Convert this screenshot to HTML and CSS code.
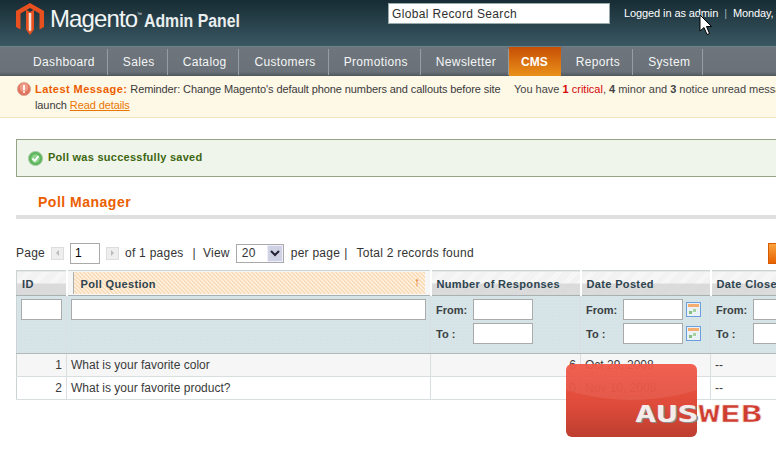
FILE: index.html
```html
<!DOCTYPE html>
<html lang="en">
<head>
  <meta charset="UTF-8" />
  <title>Poll Manager / Magento Admin</title>
  <link rel="stylesheet" href="styles.css">
</head>
<body>
<div class="page">

  <div class="header">
    <div class="brand">
      <svg class="logo" width="28" height="32" viewBox="0 0 28 32">
        <path fill="#e8501f" d="M14 0 L28 8 V24 L23.500 26.500 V10.500 L14 5 L4.500 10.500 V26.500 L0 24 V8 Z"/>
        <path fill="#e8501f" d="M14 9 L18 6.800 V26.500 L14 32 L10 26.500 V6.800 Z"/>
        <path fill="#f5f0e8" d="M12.700 10 H15.300 V27 L14 28.500 L12.700 27 Z" opacity=".9"/>
      </svg>
      <span class="brand-name">Magento<sup>™</sup></span>
      <span class="brand-sub">Admin Panel</span>
    </div>
    <input class="search" type="text" value="Global Record Search" />
    <div class="login">Logged in as admin <span class="sep">|</span> Monday, November 10, 2008</div>
  </div>

  <div class="nav">
    <a class="nav-item">Dashboard</a>
    <a class="nav-item">Sales</a>
    <a class="nav-item">Catalog</a>
    <a class="nav-item">Customers</a>
    <a class="nav-item">Promotions</a>
    <a class="nav-item">Newsletter</a>
    <a class="nav-item active">CMS</a>
    <a class="nav-item">Reports</a>
    <a class="nav-item">System</a>
  </div>

  <div class="notice">
    <svg class="notice-icon" width="14" height="14" viewBox="0 0 16 16">
      <circle cx="8" cy="8" r="7.500" fill="#e2735c" stroke="#d9a795"/>
      <circle cx="8" cy="6" r="5" fill="#ee9c88"/>
      <rect x="7" y="3.500" width="2" height="6" fill="#fff"/>
      <rect x="7" y="10.500" width="2" height="2" fill="#fff"/>
    </svg>
    <div class="notice-msg"><b>Latest Message:</b> Reminder: Change Magento's default phone numbers and callouts before site launch <a>Read details</a></div>
    <div class="notice-count">You have <b class="crit">1</b> <span class="crit">critical</span>, <b>4</b> minor and <b>3</b> notice unread messages</div>
  </div>

  <div class="content">
    <div class="success">
      <svg width="15" height="15" viewBox="0 0 16 16">
        <circle cx="8" cy="8" r="7.500" fill="#5db65c" stroke="#a9c9a4"/>
        <circle cx="8" cy="8" r="4.500" fill="#8fd28c"/>
        <path d="M4.800 8 L7.200 10.500 L11.200 5.500" fill="none" stroke="#fff" stroke-width="2"/>
      </svg>
      <span class="success-text">Poll was successfully saved</span>
    </div>

    <h3 class="title">Poll Manager</h3>

    <div class="pager">
      <span>Page</span>
      <span class="arrow"><i class="tri left"></i></span>
      <input class="page-input" type="text" value="1" />
      <span class="arrow"><i class="tri right"></i></span>
      <span>of 1 pages</span>
      <span class="bar">|</span>
      <span>View</span>
      <span class="view-select">20<span class="drop"><svg width="10" height="7" viewBox="0 0 10 7"><path d="M1 1 L5 5 L9 1" fill="none" stroke="#223" stroke-width="2"/></svg></span></span>
      <span>per page</span>
      <span class="bar tight">|</span>
      <span>Total 2 records found</span>
      <span class="action"></span>
    </div>

    <table class="grid">
      <colgroup>
        <col class="c-id"><col class="c-q"><col class="c-n"><col class="c-d"><col class="c-e">
      </colgroup>
      <tr class="heads">
        <th>ID</th>
        <th class="sorted"><div class="sort-box">Poll Question<span class="sort-arrow">↑</span></div></th>
        <th>Number of Responses</th>
        <th>Date Posted</th>
        <th>Date Closed</th>
      </tr>
      <tr class="filters">
        <td><input class="f-id" type="text" /></td>
        <td><input class="f-q" type="text" /></td>
        <td>
          <div class="range"><label>From:</label><input type="text" /></div>
          <div class="range"><label>To :</label><input type="text" /></div>
        </td>
        <td>
          <div class="range"><label>From:</label><input type="text" /><svg class="cal" width="15" height="15" viewBox="0 0 15 15"><use href="#cal"/></svg></div>
          <div class="range"><label>To :</label><input type="text" /><svg class="cal" width="15" height="15" viewBox="0 0 15 15"><use href="#cal"/></svg></div>
        </td>
        <td>
          <div class="range"><label>From:</label><input type="text" /></div>
          <div class="range"><label>To :</label><input type="text" /></div>
        </td>
      </tr>
      <tr class="odd">
        <td class="num">1</td><td>What is your favorite color</td><td class="num">6</td><td>Oct 29, 2008</td><td>--</td>
      </tr>
      <tr>
        <td class="num">2</td><td>What is your favorite product?</td><td class="num">0</td><td>Nov 10, 2008</td><td>--</td>
      </tr>
    </table>
  </div>

  <svg width="0" height="0" class="defs">
    <symbol id="cal" viewBox="0 0 15 15">
      <rect x=".5" y=".5" width="14" height="14" fill="#eaf2f8" stroke="#6a9fdc"/>
      <rect x="2" y="2" width="11" height="3" fill="#f6ad70"/>
      <rect x="3" y="9" width="3" height="3" fill="#86bd80"/>
      <rect x="7" y="7" width="3" height="3" fill="#a5d39f"/>
    </symbol>
  </svg>

  <svg class="cursor" width="14" height="22" viewBox="0 0 14 22">
    <path d="M1 1 V17 L5 13.500 L8 20.500 L10.500 19.500 L7.500 12.500 L12.500 12.500 Z" fill="#fff" stroke="#000"/>
  </svg>

  <div class="badge"><div class="gloss"></div></div>
  <div class="badge-text"><span class="aus">AUS</span><span class="web">WEB</span></div>
</div>
</body>
</html>
```

FILE: styles.css
```css
html, body {
  margin: 0;
  padding: 0;
  height: 450px;
  overflow: hidden;
}
body {
  font-family: "Liberation Sans", Arial, sans-serif;
  font-size: 12px;
  color: #2f2f2f;
  background: #fff;
}
.page {
  position: relative;
  width: 776px;
  height: 450px;
  overflow: hidden;
}
input {
  font-family: inherit;
  box-sizing: border-box;
  background: #fff;
  border: 1px solid #aaa;
  border-radius: 0;
  outline: none;
  margin: 0;
}

/* header */
.header {
  display: flex;
  align-items: flex-start;
  height: 47px;
  box-sizing: border-box;
  background: linear-gradient(#172c34, #3a5863);
  border-bottom: 1px solid #6d8189;
  white-space: nowrap;
  overflow: hidden;
}
.brand {
  display: flex;
  align-items: baseline;
  width: 388px;
  flex: none;
  padding: 3px 0 0 16px;
  box-sizing: border-box;
  height: 46px;
}
.logo {
  align-self: flex-start;
  flex: none;
}
.brand-name {
  font-size: 24px;
  color: #f2f5f5;
  margin-left: 6px;
  letter-spacing: -.9px;
  line-height: 32px;
}
.brand-name sup {
  font-size: 5px;
  vertical-align: 11px;
  line-height: 0;
  letter-spacing: 0;
}
.brand-sub {
  font-weight: bold;
  font-size: 18px;
  color: #e8eeee;
  margin-left: 2px;
  display: inline-block;
  transform-origin: 0 50%;
  transform: scaleX(.88);
}
.search {
  flex: none;
  width: 222px;
  height: 21px;
  margin-top: 3px;
  padding: 0 3px;
  font-size: 12px;
  letter-spacing: .35px;
  color: #2f2f2f;
  border: 1px solid #9aa;
}
.login {
  flex: none;
  margin: 7px 0 0 14px;
  font-size: 11px;
  letter-spacing: -.1px;
  color: #fff;
}
.sep {
  color: #9fb1b7;
  margin: 0 3px;
}

/* nav */
.nav {
  display: flex;
  height: 29px;
  padding-left: 18px;
  background: linear-gradient(#6e757c 0, #6a7178 85%, #4f565c 100%);
}
.nav-item {
  box-sizing: border-box;
  padding: 0 12px 0 15px;
  color: #f4f6f6;
  letter-spacing: .35px;
  border-right: 1px solid #979ea3;
  margin: 2px 0 1px;
  line-height: 27px;
}
.nav-item.active {
  margin: 0;
  padding: 0 13px 0 12px;
  line-height: 30px;
  font-weight: bold;
  letter-spacing: 0;
  color: #fff;
  background: linear-gradient(#c64f05, #ea9119);
  border-right: 0;
}

/* notices */
.notice {
  display: flex;
  height: 42px;
  box-sizing: border-box;
  background: #fef8e7;
  border-bottom: 1px solid #efe6c0;
  font-size: 11px;
  line-height: 16px;
  white-space: nowrap;
  overflow: hidden;
}
.notice-icon {
  flex: none;
  margin: 6px 0 0 17px;
}
.notice-msg {
  flex: none;
  width: 467px;
  margin: 5px 0 0 4px;
  white-space: normal;
  letter-spacing: -.1px;
  color: #3a3a3a;
}
.notice-msg b {
  color: #eb5e00;
  letter-spacing: .45px;
}
.notice-msg a {
  color: #ea7601;
  text-decoration: underline;
}
.notice-count {
  flex: none;
  margin: 5px 0 0 12px;
  color: #444;
}
.crit {
  color: #d40707;
}

/* content */
.content {
  padding: 21px 0 0 16px;
  width: 900px;
}
.success {
  display: flex;
  align-items: center;
  gap: 5px;
  height: 38px;
  box-sizing: border-box;
  padding-left: 11px;
  background: #eff5ea;
  border: 1px solid #95a486;
  color: #3d6611;
  font-size: 11px;
  letter-spacing: .26px;
  font-weight: bold;
}
.success-text {
  margin-bottom: 2px;
}
.title {
  margin: 14px 0 0;
  height: 24px;
  padding-left: 22px;
  border-bottom: 4px solid #dfdfdf;
  color: #eb5e00;
  font-size: 14px;
  line-height: 22px;
  letter-spacing: .5px;
}
.pager {
  display: flex;
  align-items: center;
  height: 22px;
  margin-top: 23px;
  letter-spacing: .25px;
  color: #333;
  white-space: nowrap;
}
.arrow {
  display: flex;
  align-items: center;
  justify-content: center;
  width: 13px;
  height: 13px;
  margin: 0 6px;
  box-sizing: border-box;
  background: #eee;
  border: 1px solid #ddd;
}
.tri {
  width: 0;
  height: 0;
  border: 3px solid transparent;
}
.tri.left {
  border-right-color: #bbb;
  border-left-width: 0;
}
.tri.right {
  border-left-color: #bbb;
  border-right-width: 0;
}
.page-input {
  width: 30px;
  height: 21px;
  padding: 0 4px;
  font-size: 12px;
}
.bar {
  margin: 0 7px 0 9px;
}
.bar.tight {
  margin: 0 9px 0 4px;
}
.view-select {
  display: flex;
  align-items: center;
  justify-content: space-between;
  width: 48px;
  height: 19px;
  margin: 0 7px 0 6px;
  padding-left: 5px;
  box-sizing: border-box;
  border: 1px solid #aaa;
}
.drop {
  display: flex;
  align-items: center;
  justify-content: center;
  width: 16px;
  height: 17px;
  background: #cfd2e2;
  border: 1px solid #eef;
  box-sizing: border-box;
}
.action {
  flex: none;
  width: 30px;
  height: 21px;
  margin-left: 294px;
  background: linear-gradient(#f9a33f, #e76200);
  border: 1px solid #d85a00;
  box-sizing: border-box;
}

/* table */
.grid {
  table-layout: fixed;
  width: 860px;
  margin-top: 6px;
  border-collapse: collapse;
  border: 1px solid #cbd3d4;
  font-size: 12px;
}
.c-id { width: 50px; }
.c-q { width: 364px; }
.c-n { width: 150px; }
.c-d { width: 130px; }
.c-e { width: 166px; }
.grid th {
  height: 25px;
  padding: 2px 4px 0 5px;
  box-sizing: border-box;
  text-align: left;
  font-size: 11px;
  letter-spacing: .35px;
  color: #2d444f;
  white-space: nowrap;
  background:
    linear-gradient(transparent 50%, rgba(210, 210, 210, .75) 50%),
    repeating-linear-gradient(135deg, #eeeeee 0 1px, #fafafa 1px 2px);
  border-right: 2px solid #fff;
  border-bottom: 1px solid #a9b0b2;
}
.grid th.sorted {
  padding: 1px 4px 1px 5px;
  background: #f6f6f6;
}
.sort-box {
  display: flex;
  justify-content: space-between;
  height: 22px;
  line-height: 24px;
  margin-right: 1px;
  padding: 0 4px 0 7px;
  border-left: 1px solid #a9b0b2;
  background:
    linear-gradient(45deg, #fbdcb9 25%, #fff0de 25% 50%, #fbdcb9 50% 75%, #fff0de 75%) 0 0 / 4px 4px;
}
.sort-arrow {
  color: #e05d00;
  font-size: 13px;
  font-weight: bold;
  line-height: 20px;
}
.filters td {
  height: 58px;
  padding: 3px 0 0 4px;
  box-sizing: border-box;
  vertical-align: top;
  background-color: #d7e5e8;
  background-image: radial-gradient(#cddcdf 1px, transparent 1px);
  background-size: 3px 3px;
  border-right: 1px solid #b3b8ba;
  border-bottom: 1px solid #b3b8ba;
}
.filters input {
  height: 21px;
  display: block;
}
.f-id {
  width: 41px;
}
.f-q {
  width: 355px;
}
.range {
  display: flex;
  align-items: center;
  height: 21px;
  margin-bottom: 3px;
  padding-left: 1px;
}
.range label {
  width: 37px;
  font-size: 11px;
  font-weight: bold;
  color: #3a3f42;
}
.range input {
  width: 60px;
}
.cal {
  margin-left: 3px;
}
.grid td {
  border-right: 1px solid #d9dfe0;
}
.grid tr.odd td,
.grid tr:last-child td {
  height: 23px;
  padding: 0 4px;
  box-sizing: border-box;
  border-bottom: 1px solid #d9dfe0;
  color: #3a3a3a;
}
.grid tr.odd td {
  background: #f6f6f6;
}
.grid td.num {
  text-align: right;
}
.defs {
  position: absolute;
}

/* overlays */
.cursor {
  position: absolute;
  left: 699px;
  top: 14px;
}
.badge {
  position: absolute;
  left: 566px;
  top: 364px;
  width: 131px;
  height: 73px;
  border-radius: 6px;
  background: linear-gradient(rgba(240, 74, 56, .95), rgba(222, 70, 52, .97) 55%, #bd3e30);
  overflow: hidden;
}
.gloss {
  position: absolute;
  left: -40px;
  top: -60px;
  width: 211px;
  height: 96px;
  border-radius: 50%;
  background: rgba(255, 255, 255, .08);
}
.badge-text {
  position: absolute;
  left: 635px;
  top: 401px;
  font-family: "DejaVu Sans Mono", monospace;
  font-size: 23px;
  line-height: 26px;
  font-weight: bold;
  white-space: nowrap;
  transform-origin: 0 50%;
  transform: scaleX(1.53);
}
.aus {
  color: #f4ecea;
  text-shadow: 1px 1px 0 #8d8d8d;
}
.web {
  color: #cf3d30;
  -webkit-text-stroke: .5px #f2d9d5;
}
```
